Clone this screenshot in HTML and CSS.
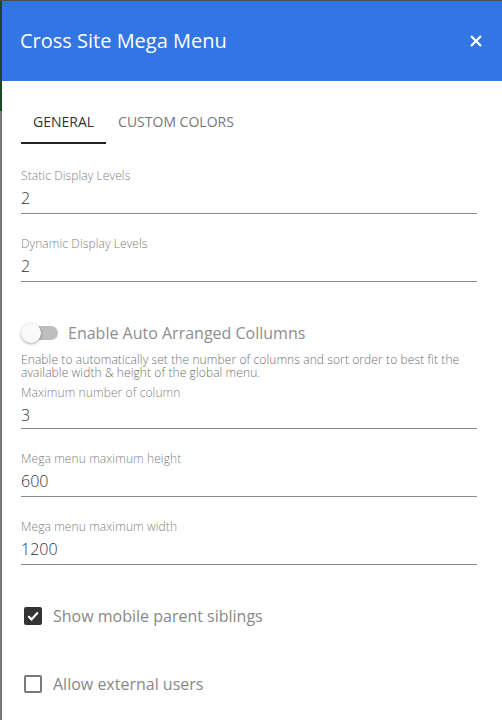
FILE: index.html
```html
<!DOCTYPE html>
<html lang="en">
<head>
<meta charset="utf-8">
<title>Cross Site Mega Menu</title>
<link rel="stylesheet" href="styles.css">
</head>
<body>
<div class="frame">
  <div class="panel">
    <header class="header">
      <h1 class="title">Cross Site Mega Menu</h1>
      <button class="close" aria-label="Close">
        <svg width="12" height="12" viewBox="0 0 12 12"><path d="M1 1 L11 11 M11 1 L1 11" stroke="#fff" stroke-width="2.2" fill="none"/></svg>
      </button>
    </header>

    <nav class="tabs">
      <div class="tab active">GENERAL</div>
      <div class="tab">CUSTOM COLORS</div>
    </nav>

    <div class="form">
      <div class="field first">
        <div class="label">Static Display Levels</div>
        <div class="value">2</div>
      </div>
      <div class="field">
        <div class="label">Dynamic Display Levels</div>
        <div class="value">2</div>
      </div>

      <div class="toggle-row">
        <span class="toggle"><span class="track"></span><span class="knob"></span></span>
        <span class="toggle-label">Enable Auto Arranged Collumns</span>
      </div>
      <div class="desc">Enable to automatically set the number of columns and sort order to best fit the available width &amp; height of the global menu.</div>

      <div class="field tight">
        <div class="label">Maximum number of column</div>
        <div class="value">3</div>
      </div>
      <div class="field">
        <div class="label">Mega menu maximum height</div>
        <div class="value">600</div>
      </div>
      <div class="field">
        <div class="label">Mega menu maximum width</div>
        <div class="value">1200</div>
      </div>

      <div class="check-row first-check">
        <span class="box checked">
          <svg width="14" height="14" viewBox="0 0 14 14"><path d="M2.3 7.2 L5.6 10.4 L11.8 3.6" stroke="#fff" stroke-width="2.2" fill="none"/></svg>
        </span>
        <span class="check-label">Show mobile parent siblings</span>
      </div>
      <div class="check-row">
        <span class="box"></span>
        <span class="check-label">Allow external users</span>
      </div>
    </div>
  </div>
</div>
</body>
</html>
```

FILE: styles.css
```css
html, body {
  margin: 0;
  padding: 0;
  background: #fff;
}

body {
  font-family: "Open Sans", "Noto Sans", sans-serif;
  color: #333;
}

.frame {
  border-top: 1px solid #4e4e4e;
  min-height: 719px;
  padding-left: 2px;
  background:
    linear-gradient(#1b4a22, #1b4a22) 0 0 / 2px 110px no-repeat,
    linear-gradient(#777, #777) 0 0 / 2px 100% no-repeat,
    #fff;
}

.panel {
  background: #fff;
}

.header {
  height: 80px;
  background: #3375e2;
  display: flex;
  align-items: center;
  justify-content: space-between;
  padding: 0 20px 0 18px;
}

.title {
  margin: 0;
  font-size: 20px;
  font-weight: 400;
  color: #fff;
  line-height: 28px;
}

.close {
  border: 0;
  background: transparent;
  padding: 0;
  width: 12px;
  height: 12px;
  display: flex;
}

.tabs {
  display: flex;
  padding-left: 19px;
}

.tab {
  padding: 30px 12px 9px;
  line-height: 22px;
  font-size: 14px;
  color: #777;
  border-bottom: 2px solid transparent;
}

.tab.active {
  color: #333;
  border-bottom-color: #222;
}

.form {
  padding: 0 25px 0 19px;
}

.field {
  border-bottom: 1px solid #8a8a8a;
  padding-bottom: 4px;
  margin-top: 23px;
}

.field.first {
  margin-top: 25px;
}

.field.tight {
  margin-top: 7px;
  padding-bottom: 2px;
}

.label {
  font-size: 12px;
  line-height: 14px;
  font-weight: 300;
  letter-spacing: 0.1px;
  color: #808080;
}

.value {
  margin-top: 4px;
  font-size: 16px;
  line-height: 22px;
  font-weight: 300;
  color: #333;
}

.toggle-row {
  display: flex;
  align-items: center;
  height: 24px;
  margin-top: 39px;
}

.toggle {
  position: relative;
  width: 37px;
  height: 20px;
  flex: none;
}

.track {
  position: absolute;
  left: 3px;
  top: 3px;
  width: 34px;
  height: 14px;
  border-radius: 7px;
  background: #bdbdbd;
}

.knob {
  position: absolute;
  left: 0;
  top: 0;
  width: 20px;
  height: 20px;
  border-radius: 50%;
  background: #fafafa;
  box-shadow: 0 1px 3px rgba(0, 0, 0, 0.35);
}

.toggle-label {
  margin-left: 10px;
  font-size: 16px;
  font-weight: 400;
  color: #8e8e8e;
}

.desc {
  margin-top: 8px;
  font-size: 12px;
  line-height: 13px;
  font-weight: 300;
  letter-spacing: 0.1px;
  color: #707070;
}

.check-row {
  display: flex;
  align-items: center;
  height: 24px;
  margin-top: 44px;
  padding-left: 3px;
}

.check-row.first-check {
  margin-top: 39px;
}

.box {
  width: 18px;
  height: 18px;
  box-sizing: border-box;
  border: 2px solid #7a7a7a;
  border-radius: 2px;
  flex: none;
  display: flex;
  align-items: center;
  justify-content: center;
}

.box.checked {
  background: #333;
  border-color: #333;
}

.check-label {
  margin-left: 11px;
  font-size: 16px;
  font-weight: 400;
  color: #888;
}
```
